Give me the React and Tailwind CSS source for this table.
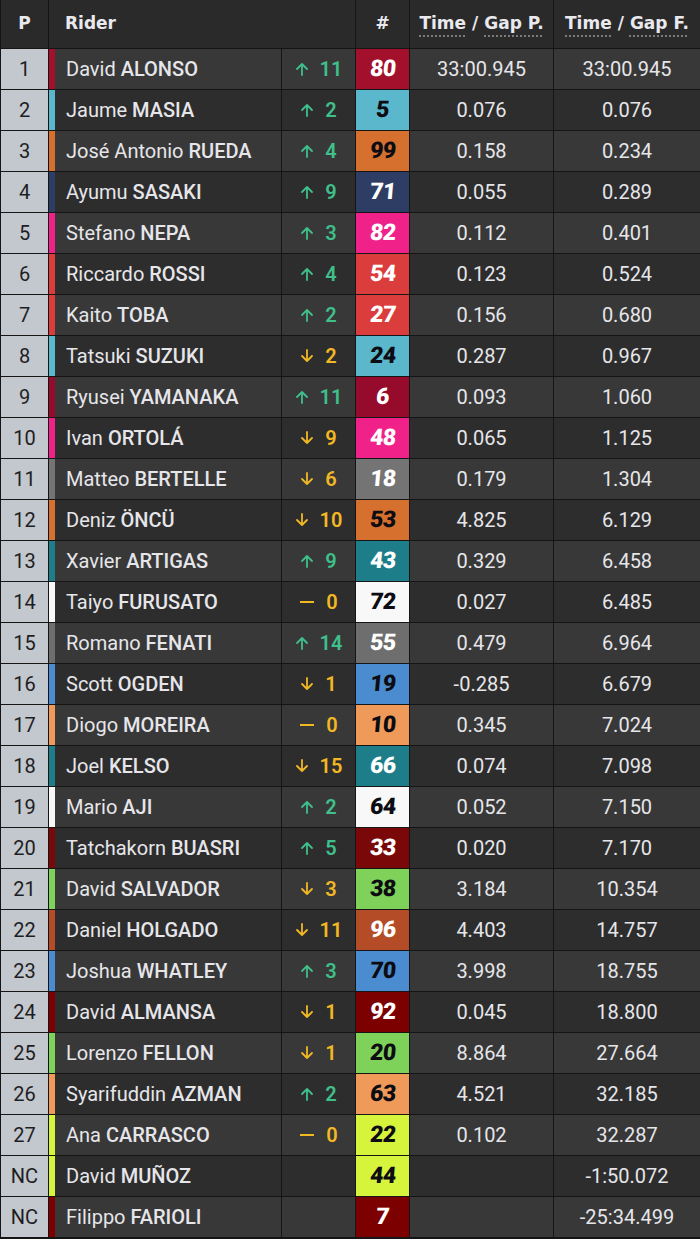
import React from 'react';

const riders = [
  { pos: '1', first: 'David', last: 'ALONSO', dir: 'up', chg: '11', num: '80', color: '#a3102b', dark: false, gapP: '33:00.945', gapF: '33:00.945' },
  { pos: '2', first: 'Jaume', last: 'MASIA', dir: 'up', chg: '2', num: '5', color: '#5bb7cb', dark: true, gapP: '0.076', gapF: '0.076' },
  { pos: '3', first: 'José Antonio', last: 'RUEDA', dir: 'up', chg: '4', num: '99', color: '#d5702f', dark: true, gapP: '0.158', gapF: '0.234' },
  { pos: '4', first: 'Ayumu', last: 'SASAKI', dir: 'up', chg: '9', num: '71', color: '#2e3d63', dark: false, gapP: '0.055', gapF: '0.289' },
  { pos: '5', first: 'Stefano', last: 'NEPA', dir: 'up', chg: '3', num: '82', color: '#f0228a', dark: false, gapP: '0.112', gapF: '0.401' },
  { pos: '6', first: 'Riccardo', last: 'ROSSI', dir: 'up', chg: '4', num: '54', color: '#db3c3c', dark: false, gapP: '0.123', gapF: '0.524' },
  { pos: '7', first: 'Kaito', last: 'TOBA', dir: 'up', chg: '2', num: '27', color: '#db3c3c', dark: false, gapP: '0.156', gapF: '0.680' },
  { pos: '8', first: 'Tatsuki', last: 'SUZUKI', dir: 'down', chg: '2', num: '24', color: '#5bb7cb', dark: true, gapP: '0.287', gapF: '0.967' },
  { pos: '9', first: 'Ryusei', last: 'YAMANAKA', dir: 'up', chg: '11', num: '6', color: '#960b2c', dark: false, gapP: '0.093', gapF: '1.060' },
  { pos: '10', first: 'Ivan', last: 'ORTOLÁ', dir: 'down', chg: '9', num: '48', color: '#f0228a', dark: false, gapP: '0.065', gapF: '1.125' },
  { pos: '11', first: 'Matteo', last: 'BERTELLE', dir: 'down', chg: '6', num: '18', color: '#747474', dark: false, gapP: '0.179', gapF: '1.304' },
  { pos: '12', first: 'Deniz', last: 'ÖNCÜ', dir: 'down', chg: '10', num: '53', color: '#d5702f', dark: true, gapP: '4.825', gapF: '6.129' },
  { pos: '13', first: 'Xavier', last: 'ARTIGAS', dir: 'up', chg: '9', num: '43', color: '#1d7d89', dark: false, gapP: '0.329', gapF: '6.458' },
  { pos: '14', first: 'Taiyo', last: 'FURUSATO', dir: 'same', chg: '0', num: '72', color: '#f8f8f8', dark: true, gapP: '0.027', gapF: '6.485' },
  { pos: '15', first: 'Romano', last: 'FENATI', dir: 'up', chg: '14', num: '55', color: '#6e6e6e', dark: false, gapP: '0.479', gapF: '6.964' },
  { pos: '16', first: 'Scott', last: 'OGDEN', dir: 'down', chg: '1', num: '19', color: '#4a8ccf', dark: true, gapP: '-0.285', gapF: '6.679' },
  { pos: '17', first: 'Diogo', last: 'MOREIRA', dir: 'same', chg: '0', num: '10', color: '#f09a5a', dark: true, gapP: '0.345', gapF: '7.024' },
  { pos: '18', first: 'Joel', last: 'KELSO', dir: 'down', chg: '15', num: '66', color: '#1d7d89', dark: false, gapP: '0.074', gapF: '7.098' },
  { pos: '19', first: 'Mario', last: 'AJI', dir: 'up', chg: '2', num: '64', color: '#f8f8f8', dark: true, gapP: '0.052', gapF: '7.150' },
  { pos: '20', first: 'Tatchakorn', last: 'BUASRI', dir: 'up', chg: '5', num: '33', color: '#7a0808', dark: false, gapP: '0.020', gapF: '7.170' },
  { pos: '21', first: 'David', last: 'SALVADOR', dir: 'down', chg: '3', num: '38', color: '#7ed25a', dark: true, gapP: '3.184', gapF: '10.354' },
  { pos: '22', first: 'Daniel', last: 'HOLGADO', dir: 'down', chg: '11', num: '96', color: '#b44c28', dark: false, gapP: '4.403', gapF: '14.757' },
  { pos: '23', first: 'Joshua', last: 'WHATLEY', dir: 'up', chg: '3', num: '70', color: '#4a8ccf', dark: true, gapP: '3.998', gapF: '18.755' },
  { pos: '24', first: 'David', last: 'ALMANSA', dir: 'down', chg: '1', num: '92', color: '#7d0000', dark: false, gapP: '0.045', gapF: '18.800' },
  { pos: '25', first: 'Lorenzo', last: 'FELLON', dir: 'down', chg: '1', num: '20', color: '#7ed25a', dark: true, gapP: '8.864', gapF: '27.664' },
  { pos: '26', first: 'Syarifuddin', last: 'AZMAN', dir: 'up', chg: '2', num: '63', color: '#f09a5a', dark: true, gapP: '4.521', gapF: '32.185' },
  { pos: '27', first: 'Ana', last: 'CARRASCO', dir: 'same', chg: '0', num: '22', color: '#d6f43c', dark: true, gapP: '0.102', gapF: '32.287' },
  { pos: 'NC', first: 'David', last: 'MUÑOZ', dir: null, chg: '', num: '44', color: '#d6f43c', dark: true, gapP: '', gapF: '-1:50.072' },
  { pos: 'NC', first: 'Filippo', last: 'FARIOLI', dir: null, chg: '', num: '7', color: '#7d0000', dark: false, gapP: '', gapF: '-25:34.499' },
];

const body = { fontFamily: 'Roboto, "Liberation Sans", sans-serif' };
const display = { fontFamily: '"DejaVu Sans", "Liberation Sans", sans-serif' };

function ChangeIcon({ dir }) {
  if (dir === 'same') {
    return (
      <svg width="16" height="14" viewBox="0 0 16 14">
        <path d="M1 7h14" stroke="currentColor" strokeWidth="2" />
      </svg>
    );
  }
  const d = dir === 'up' ? 'M7 13V2M2 7l5-5 5 5' : 'M7 1v11M2 7l5 5 5-5';
  return (
    <svg width="14" height="14" viewBox="0 0 14 14" fill="none">
      <path d={d} stroke="currentColor" strokeWidth="1.8" strokeLinecap="round" strokeLinejoin="round" />
    </svg>
  );
}

function Change({ dir, chg }) {
  if (!dir) return null;
  const colorClass = dir === 'up' ? 'text-[#3fbf8a]' : 'text-[#f2b824]';
  return (
    <span className={`flex items-center gap-[11px] ${colorClass}`}>
      <ChangeIcon dir={dir} />
      <span className="text-[20px] font-semibold leading-none">{chg}</span>
    </span>
  );
}

function HeadAbbr({ label }) {
  return (
    <span className="flex items-center">
      <span className="underline decoration-dotted decoration-[#8a8a8a] underline-offset-[6px]">Time</span>
      <span className="mx-[6px]">/</span>
      <span className="underline decoration-dotted decoration-[#8a8a8a] underline-offset-[6px]">{label}</span>
    </span>
  );
}

export default function App() {
  return (
    <div className="w-[700px] bg-[#151515] pb-[2px] pl-px" style={body}>
      <div className="grid grid-cols-[47px_232px_73px_53px_143px_146px] gap-px">
        {/* header */}
        <div className="h-[48px] bg-[#2a2a2a] flex items-center justify-center text-[#e9e9ee] text-[17px] font-bold" style={display}>P</div>
        <div className="h-[48px] bg-[#2a2a2a] col-span-2 flex items-center pl-[16px] text-[#e9e9ee] text-[17px] font-bold" style={display}>Rider</div>
        <div className="h-[48px] bg-[#2a2a2a] flex items-center justify-center text-[#e9e9ee] text-[17px] font-bold" style={display}>#</div>
        <div className="h-[48px] bg-[#2a2a2a] flex items-center justify-center text-[#e9e9ee] text-[17px] font-bold" style={display}>
          <HeadAbbr label="Gap P." />
        </div>
        <div className="h-[48px] bg-[#2a2a2a] flex items-center justify-center text-[#e9e9ee] text-[17px] font-bold" style={display}>
          <HeadAbbr label="Gap F." />
        </div>

        {riders.map((r, i) => {
          const rowBg = i % 2 === 0 ? 'bg-[#383838]' : 'bg-[#2d2d2d]';
          return (
            <React.Fragment key={r.pos + r.last}>
              <div className="h-[40px] bg-[#c3c7ce] flex items-center justify-center text-[#1e1e22] text-[20px]">{r.pos}</div>
              <div className={`h-[40px] ${rowBg} flex items-center`}>
                <div className="w-[6px] h-full" style={{ backgroundColor: r.color }} />
                <div className="pl-[11px] text-[20px] text-[#e6e6ea] whitespace-nowrap">
                  {r.first} <span className="font-medium">{r.last}</span>
                </div>
              </div>
              <div className={`h-[40px] ${rowBg} flex items-center justify-center`}>
                <Change dir={r.dir} chg={r.chg} />
              </div>
              <div
                className={`h-[40px] flex items-center justify-center ${r.dark ? 'text-[#0c0c12]' : 'text-white'}`}
                style={{ backgroundColor: r.color }}
              >
                <span className="text-[23px] font-black tracking-[-0.5px] -skew-x-[5deg]">{r.num}</span>
              </div>
              <div className={`h-[40px] ${rowBg} flex items-center justify-center text-[20px] text-[#e6e6ea]`}>{r.gapP}</div>
              <div className={`h-[40px] ${rowBg} flex items-center justify-center text-[20px] text-[#e6e6ea]`}>{r.gapF}</div>
            </React.Fragment>
          );
        })}
      </div>
    </div>
  );
}
